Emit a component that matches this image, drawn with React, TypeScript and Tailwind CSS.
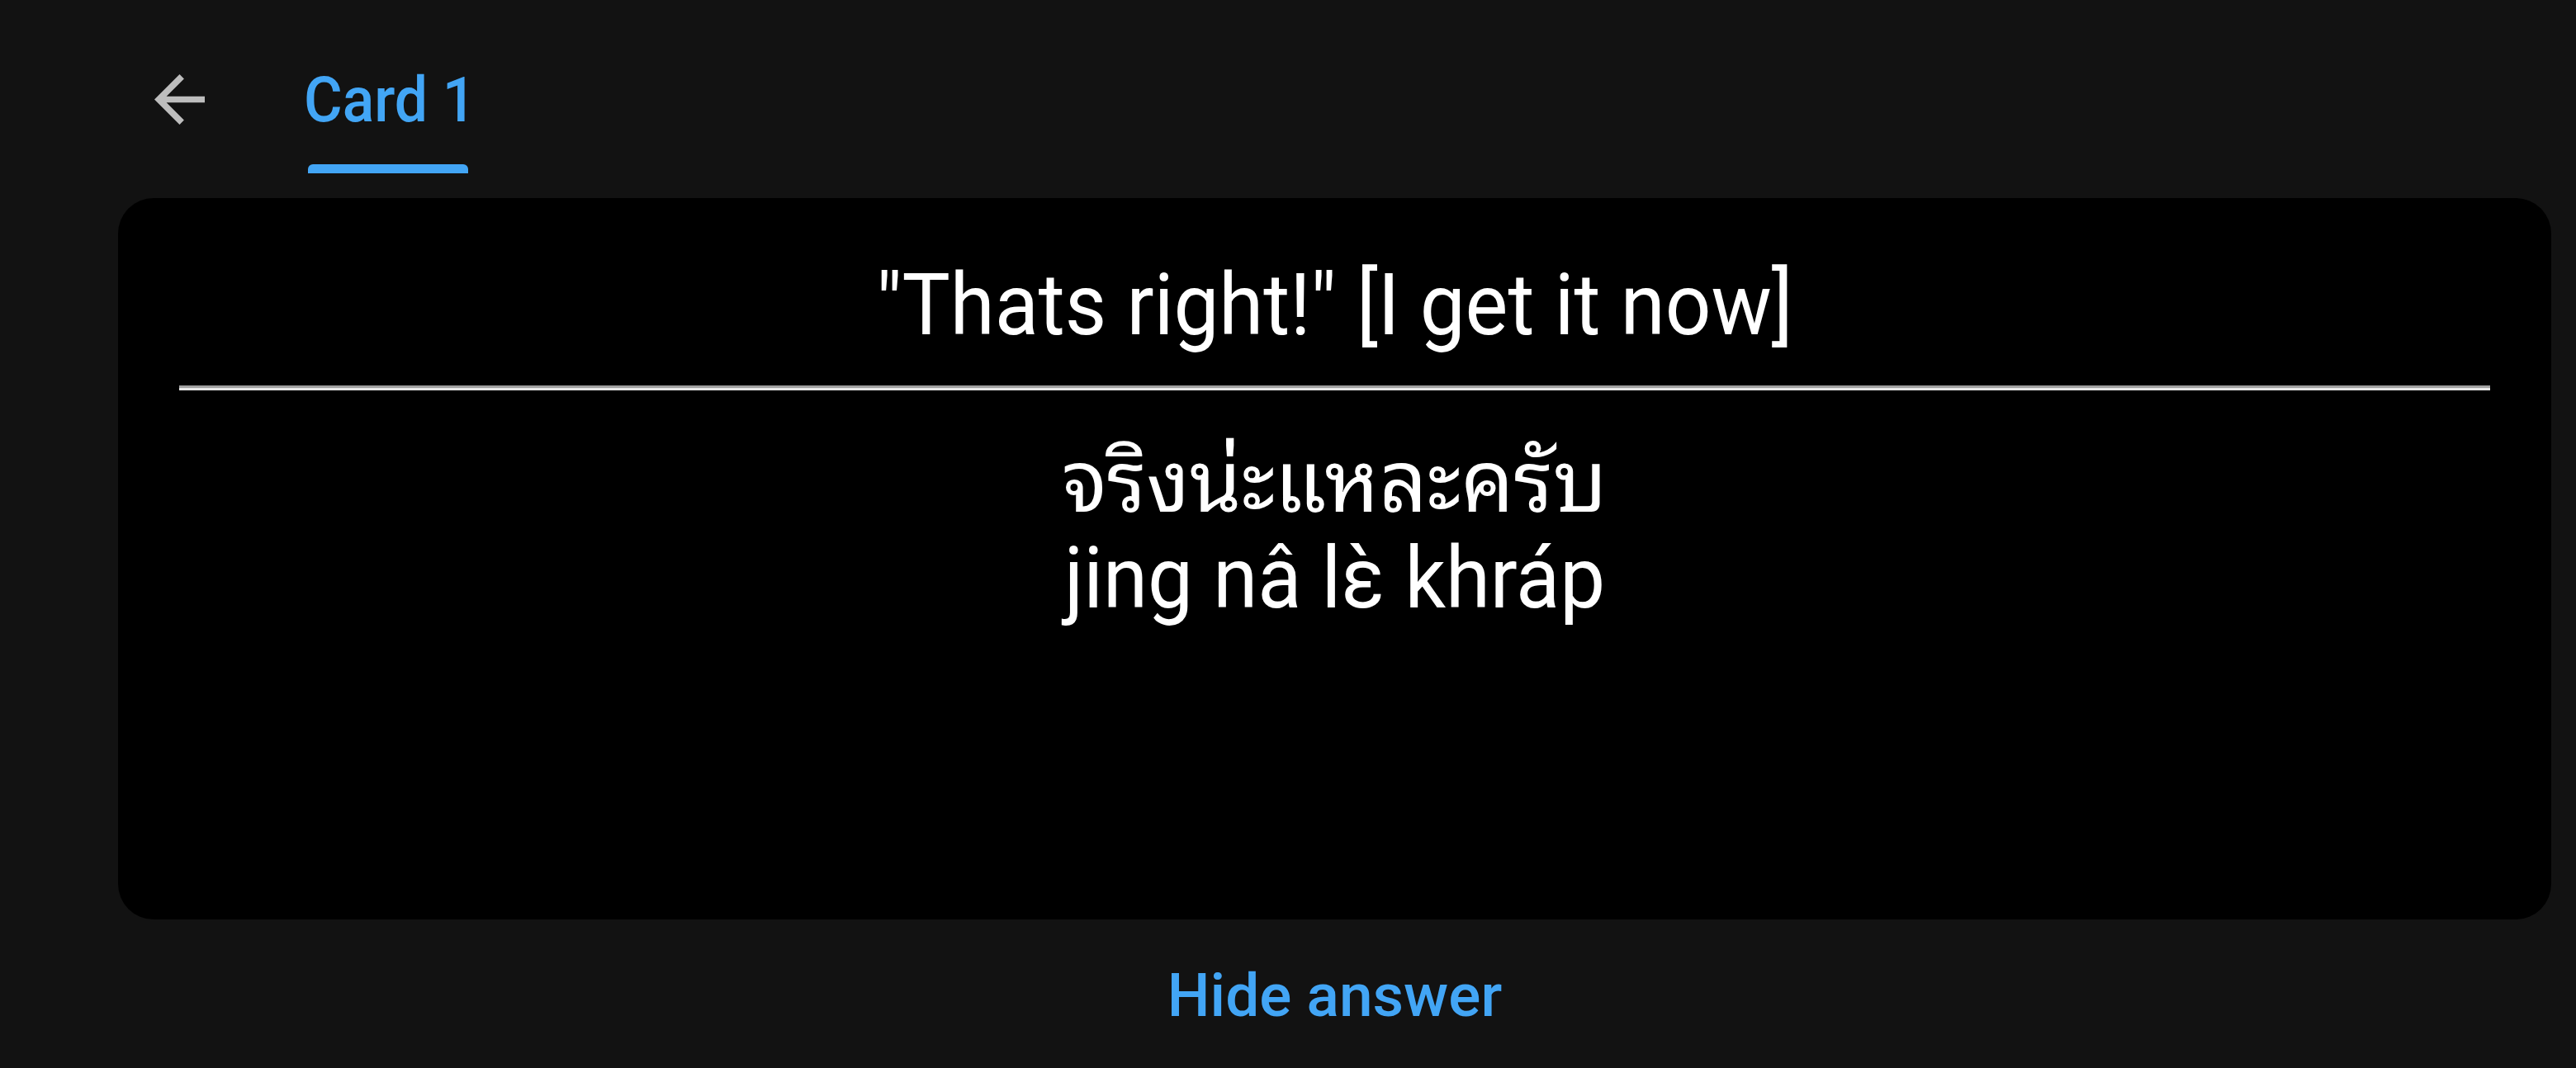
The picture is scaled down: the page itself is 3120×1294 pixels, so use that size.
import React from 'react'

const font = "font-['Roboto','Noto_Sans_Thai_Looped','Loma','Garuda','Noto_Sans_Thai','Noto_Sans','DejaVu_Sans',sans-serif]"

const BackArrow = () => (
  <svg viewBox="4 4 16 16" className="h-[61px] w-[61px]" fill="#bdbdbd">
    <path d="M20 11H7.83l5.59-5.59L12 4l-8 8 8 8 1.41-1.41L7.83 13H20v-2z" />
  </svg>
)

const Header = () => (
  <div className="flex h-[240px] items-start">
    <button className="ml-[187px] mt-[90px]">
      <BackArrow />
    </button>
    <div className="ml-[120px] flex flex-col items-start">
      <div className="mt-[83px] origin-left scale-x-[0.94] text-[76px] font-medium leading-none text-[#42a5f5]">
        Card 1
      </div>
      <div className="ml-[5px] mt-[40px] h-[11px] w-[194px] rounded-t-[6px] bg-[#42a5f5]" />
    </div>
  </div>
)

const Flashcard = () => (
  <div className="ml-[143px] mr-[30px] h-[874px] rounded-[43px] bg-black px-[74px] pt-[78px] text-white">
    <div className="scale-x-[0.94] text-center text-[104px] leading-none">
      "Thats right!" [I get it now]
    </div>
    <div className="mt-[45px] flex flex-col">
      <div className="h-[3px] bg-[#a0a0a0]" />
      <div className="h-[3px] bg-[#e6e6e6]" />
    </div>
    <div className="mt-[54px] text-center text-[104px] leading-[116px]">
      <div className="scale-x-[0.97]">จริงน่ะแหละครับ</div>
      <div className="scale-x-[0.94]">jing nâ lὲ khráp</div>
    </div>
  </div>
)

export default function App() {
  return (
    <div className={`min-h-screen bg-[#121212] ${font}`}>
      <Header />
      <Flashcard />
      <div className="ml-[143px] mr-[30px] mt-[56px] flex justify-center">
        <button className="text-[73px] font-medium leading-none text-[#42a5f5]">
          Hide answer
        </button>
      </div>
    </div>
  )
}
